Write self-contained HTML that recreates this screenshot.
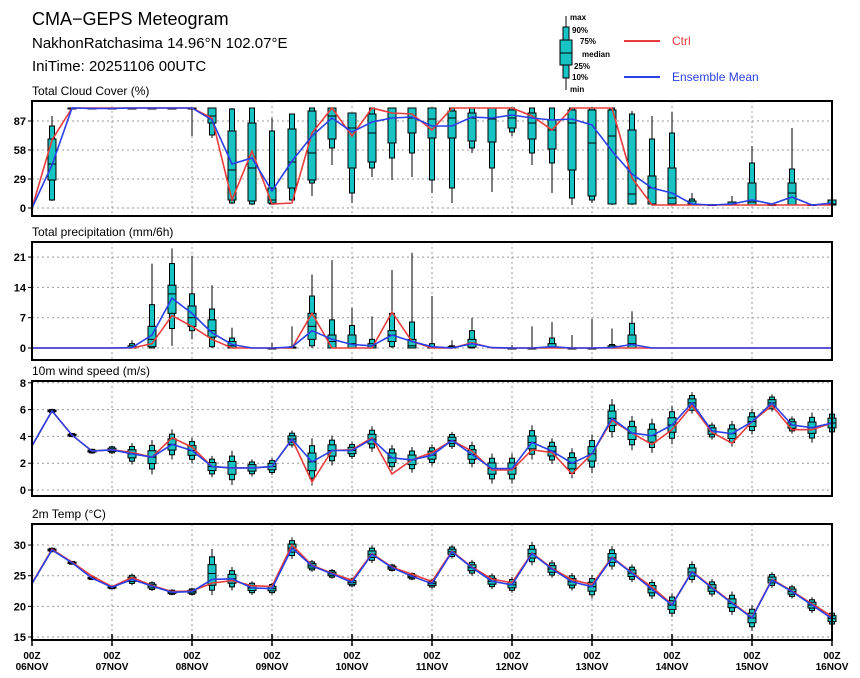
<!DOCTYPE html>
<html><head><meta charset="utf-8"><style>
html,body{margin:0;padding:0;background:#fff;}
svg{display:block;font-family:"Liberation Sans",sans-serif;}
</style></head><body>
<svg id="s" width="860" height="678" xmlns="http://www.w3.org/2000/svg">
<rect width="860" height="678" fill="#fff"/>
<text x="32" y="25" font-size="18" fill="#000">CMA−GEPS Meteogram</text>
<text x="32" y="48" font-size="15" fill="#000">NakhonRatchasima 14.96°N 102.07°E</text>
<text x="32" y="71" font-size="15" fill="#000">IniTime: 20251106 00UTC</text>
<g font-size="8" font-weight="bold" fill="#000">
<line x1="566" y1="16" x2="566" y2="90" stroke="#000"/>
<rect x="563" y="27" width="6" height="51" fill="#17c4c4" stroke="#000"/>
<rect x="560" y="40" width="12" height="25" fill="#17c4c4" stroke="#000"/>
<line x1="560" y1="53" x2="572" y2="53" stroke="#000"/>
<text x="570" y="20">max</text><text x="572" y="33">90%</text><text x="580" y="44">75%</text>
<text x="582" y="57">median</text><text x="574" y="69">25%</text><text x="572" y="80">10%</text><text x="570" y="92">min</text>
</g>
<line x1="624" y1="41" x2="660" y2="41" stroke="#e83b3b" stroke-width="2"/>
<text x="672" y="45" font-size="12" fill="#e83b3b">Ctrl</text>
<line x1="624" y1="77" x2="660" y2="77" stroke="#2a3fe8" stroke-width="2"/>
<text x="672" y="81" font-size="12" fill="#2a3fe8">Ensemble Mean</text>
<g id="g"></g>
</svg>
<script>
var NS="http://www.w3.org/2000/svg",G=document.getElementById('g');
function el(t,a,txt){var e=document.createElementNS(NS,t);for(var k in a)e.setAttribute(k,a[k]);if(txt!=null)e.textContent=txt;G.appendChild(e);return e;}
var X0=32,X1=832;function X(i){return X0+20*i;}
function panel(o){
 var Y=function(v){return o.y0+(v-o.v0)*o.k;};
 el('text',{x:32,y:o.top-6,'font-size':12},o.title);
 for(var d=1;d<10;d++)el('line',{x1:X(4*d),y1:o.top,x2:X(4*d),y2:o.bot,stroke:'#999','stroke-dasharray':'2,3'});
 o.ticks.forEach(function(t){var y=Y(t);el('line',{x1:X0,y1:y,x2:X1,y2:y,stroke:'#999','stroke-dasharray':'2,3'});
  el('line',{x1:X0-4,y1:y,x2:X0,y2:y,stroke:'#000'});
  el('text',{x:26,y:y+4,'font-size':11,'font-weight':'bold','text-anchor':'end'},String(t));});
 o.box.forEach(function(b,i){if(!b)return;var x=X(i);
  el('line',{x1:x,y1:Y(b[0]),x2:x,y2:Y(b[6]),stroke:'#000'});
  el('rect',{x:x-2.5,y:Y(b[5]),width:5,height:Math.max(1,Y(b[1])-Y(b[5])),fill:'#17c4c4',stroke:'#000'});
  el('rect',{x:x-4,y:Y(b[4]),width:8,height:Math.max(1,Y(b[2])-Y(b[4])),fill:'#17c4c4',stroke:'#000'});
  el('line',{x1:x-4,y1:Y(b[3]),x2:x+4,y2:Y(b[3]),stroke:'#000'});});
 var p=function(a){return a.map(function(v,i){return X(i)+','+Y(v).toFixed(1);}).join(' ');};
 el('polyline',{points:p(o.ctrl),fill:'none',stroke:'#e83b3b','stroke-width':1.6});
 el('polyline',{points:p(o.mean),fill:'none',stroke:'#2a3fe8','stroke-width':1.6});
 el('rect',{x:X0,y:o.top,width:X1-X0,height:o.bot-o.top,fill:'none',stroke:'#000','stroke-width':2});
}
function sym(m,s,sk){sk=sk||0;return [m-1.6*s,m-1.1*s,m-0.6*s,m+sk*s,m+0.6*s+sk*s*1.5,m+1.1*s+sk*s*2,m+1.6*s+sk*s*2.5];}
var cb=[null,[7,8,28,44,69,82,92]];
for(var i=2;i<8;i++)cb.push([99,99,99.5,100,100,100,100]);
cb=cb.concat([[72,100,100,100,100,100,100],[70,73,85,92,100,100,100],[4,5,8,38,77,99,100],[3,4,7,40,85,100,100],[3,4,5,8,20,77,90],[7,8,20,46,79,94,94],[12,25,28,55,97,100,100],[43,60,69,92,100,100,100],[5,15,40,80,95,95,95],[31,40,46,75,94,100,100],[28,50,65,90,100,100,100],[31,55,75,90,100,100,100],[15,28,70,89,100,100,100],[5,20,70,90,97,100,100],[55,60,67,90,95,100,100],[16,40,66,89,100,100,100],[72,76,80,90,98,100,100],[43,55,69,85,95,100,100],[15,45,59,78,88,100,100],[3,10,38,85,98,100,100],[5,8,12,65,98,100,100],[3,4,4,72,98,100,100],[3,4,4,14,78,94,97],[3,4,4,20,32,69,92],[3,4,4,10,40,75,96],[3,3,3,4,7,9,15],[3,3,3,3,3.5,3.5,3.5],[3,3,3,4,6,6,12],[3,3,3,6,25,45,62],[3,3,3,3,3.5,3.5,3.5],[3,3,3,15,25,39,80],[3,3,3,3,3.5,3.5,3.5],[3,3,3,4,8,8,8]]);
panel({title:'Total Cloud Cover (%)',top:101,bot:216,y0:208,v0:0,k:-1,ticks:[0,29,58,87],box:cb,
 mean:[0,43,100,99.5,99.5,100,100,100,100,88,44,50,17,47,72,90,76,86,90,91,82,82,91,90,93,90,88,89,83,57,34,20,15,4,3,4,8,4,11,3,5],
 ctrl:[0,68,100,100,100,100,100,100,100,90,8,57,4,5,75,100,72,100,95,94,78,100,100,100,100,92,78,100,100,100,30,3,3,3,3,3,3,3,3,3,3]});
var pb=[];for(i=0;i<41;i++)pb.push(null);
var P={5:[0,0,0,0,0.5,1,1.8],6:[0,0,0.3,2,5,10,19.5],7:[0.5,4.5,8,12.5,14.5,19.5,23],8:[2,4,5,7,9.7,12.5,21.3],9:[0,0.3,2.5,4,6.5,9,14.5],10:[0,0,0,0.5,1.5,2.3,4.7],12:[0,0,0,0,0,0,1.2],13:[0,0,0,0,0.2,0.3,5],14:[0,0.5,2,5,8,12,17],15:[0,0,0,1.5,3,6.5,20.3],16:[0,0,0,1,3,5.2,9.3],17:[0,0,0,0.5,1,2,7.3],18:[0,0.3,1.5,3,4,8,18],19:[0,0,0,0.5,2,6,22],20:[0,0,0,0,0.3,1,12],21:[0,0,0,0,0.3,0.5,1.8],22:[0,0,0.2,1,2,4,7],24:[0,0,0,0,0,0,0.7],25:[0,0,0,0,0,0,5],26:[0,0,0,0,1,2.3,6],27:[0,0,0,0,0,0,3],28:[0,0,0,0,0,0,6.7],29:[0,0,0,0,0.5,0.8,4.5],30:[0,0,0,1,3,5.7,8.5]};
for(var k in P)pb[k]=P[k];
var pm=[],pc=[];for(i=0;i<41;i++){pm.push(0);pc.push(0);}
[[5,.1],[6,3],[7,11.5],[8,8],[9,3.5],[10,.8],[13,.2],[14,4],[15,2],[16,.8],[17,.5],[18,3],[19,1.5],[20,.3],[22,1],[23,.1],[26,.3],[29,.1],[30,.8]].forEach(function(a){pm[a[0]]=a[1];});
[[6,1],[7,7.5],[8,5],[9,2],[14,8],[18,8.3],[19,1.5],[22,1.2]].forEach(function(a){pc[a[0]]=a[1];});
panel({title:'Total precipitation (mm/6h)',top:242,bot:360,y0:348,v0:0,k:-4.33,ticks:[0,7,14,21],box:pb,mean:pm,ctrl:pc});
var wm=[3.3,5.9,4.1,2.9,3.0,2.7,2.45,3.4,2.95,1.75,1.65,1.65,1.75,3.8,2.1,2.95,2.95,3.8,2.4,2.25,2.6,3.7,2.65,1.6,1.6,3.55,2.9,2.0,2.7,5.35,4.25,4.05,4.85,6.5,4.4,4.2,5.1,6.5,4.85,4.65,5.0];
var wc=wm.slice();[[5,2.8],[7,3.9],[8,3.2],[14,0.6],[16,3.0],[17,3.9],[18,1.2],[20,2.8],[22,2.9],[23,1.5],[24,1.5],[25,3.0],[26,2.8],[27,1.2],[29,5.2],[31,3.4],[32,4.5],[33,6.3],[34,4.3],[35,3.5],[37,6.3],[38,4.5],[39,4.5]].forEach(function(a){wc[a[0]]=a[1];});
var ws=[0,.1,.1,.12,.2,.5,.8,.7,.6,.5,.8,.4,.4,.4,1.1,.7,.4,.6,.6,.6,.5,.4,.6,.7,.7,.8,.6,.7,.9,.9,.8,.8,.9,.5,.4,.6,.6,.4,.4,.7,.6];
var wb=wm.map(function(m,i){return i==0?null:sym(m,ws[i]);});
panel({title:'10m wind speed (m/s)',top:381,bot:496,y0:490,v0:0,k:-13.4,ticks:[0,2,4,6,8],box:wb,mean:wm,ctrl:wc});
var tm=[23.7,29.2,27.1,24.6,23.1,24.4,23.3,22.3,22.4,24.4,24.5,23.0,22.9,29.5,26.6,25.3,23.9,28.5,26.3,24.9,23.7,28.9,26.3,24.1,23.5,28.6,26.1,24.0,23.2,27.9,25.4,22.8,20.2,25.6,23.0,20.5,18.1,24.3,22.4,20.2,18.0];
var tc=tm.map(function(v,i){return v+([3,5,9,10,11,12,16,19,20,23,24,27,28,31,40].indexOf(i)>=0?0.35:0.1);});
tc[5]=24.7;tc[9]=23.8;tc[10]=24.2;tc[13]=30.0;tc[40]=18.4;tc[39]=20.4;
var tsd=[0,.25,.2,.2,.2,.6,.5,.3,.4,1.6,1.2,.7,.6,1.1,.6,.5,.5,.9,.4,.4,.5,.7,.8,.8,.8,1.2,.9,.9,1.2,1.2,.9,1.0,1.2,1.1,.9,1.2,1.3,.8,.7,.8,.8];
var tb=tm.map(function(m,i){return i==0?null:sym(m,tsd[i],(i==9?0.6:0));});
panel({title:'2m Temp (°C)',top:524,bot:640,y0:637,v0:15,k:-6.13,ticks:[15,20,25,30],box:tb,mean:tm,ctrl:tc});
var days=['06NOV','07NOV','08NOV','09NOV','10NOV','11NOV','12NOV','13NOV','14NOV','15NOV','16NOV'];
days.forEach(function(d,j){var x=X(4*j);
 el('line',{x1:x,y1:634,x2:x,y2:646,stroke:'#000','stroke-width':1.5});
 el('text',{x:x,y:659,'font-size':10,'font-weight':'bold','text-anchor':'middle'},'00Z');
 el('text',{x:x,y:670,'font-size':10,'font-weight':'bold','text-anchor':'middle'},d);});
</script>
</body></html>
